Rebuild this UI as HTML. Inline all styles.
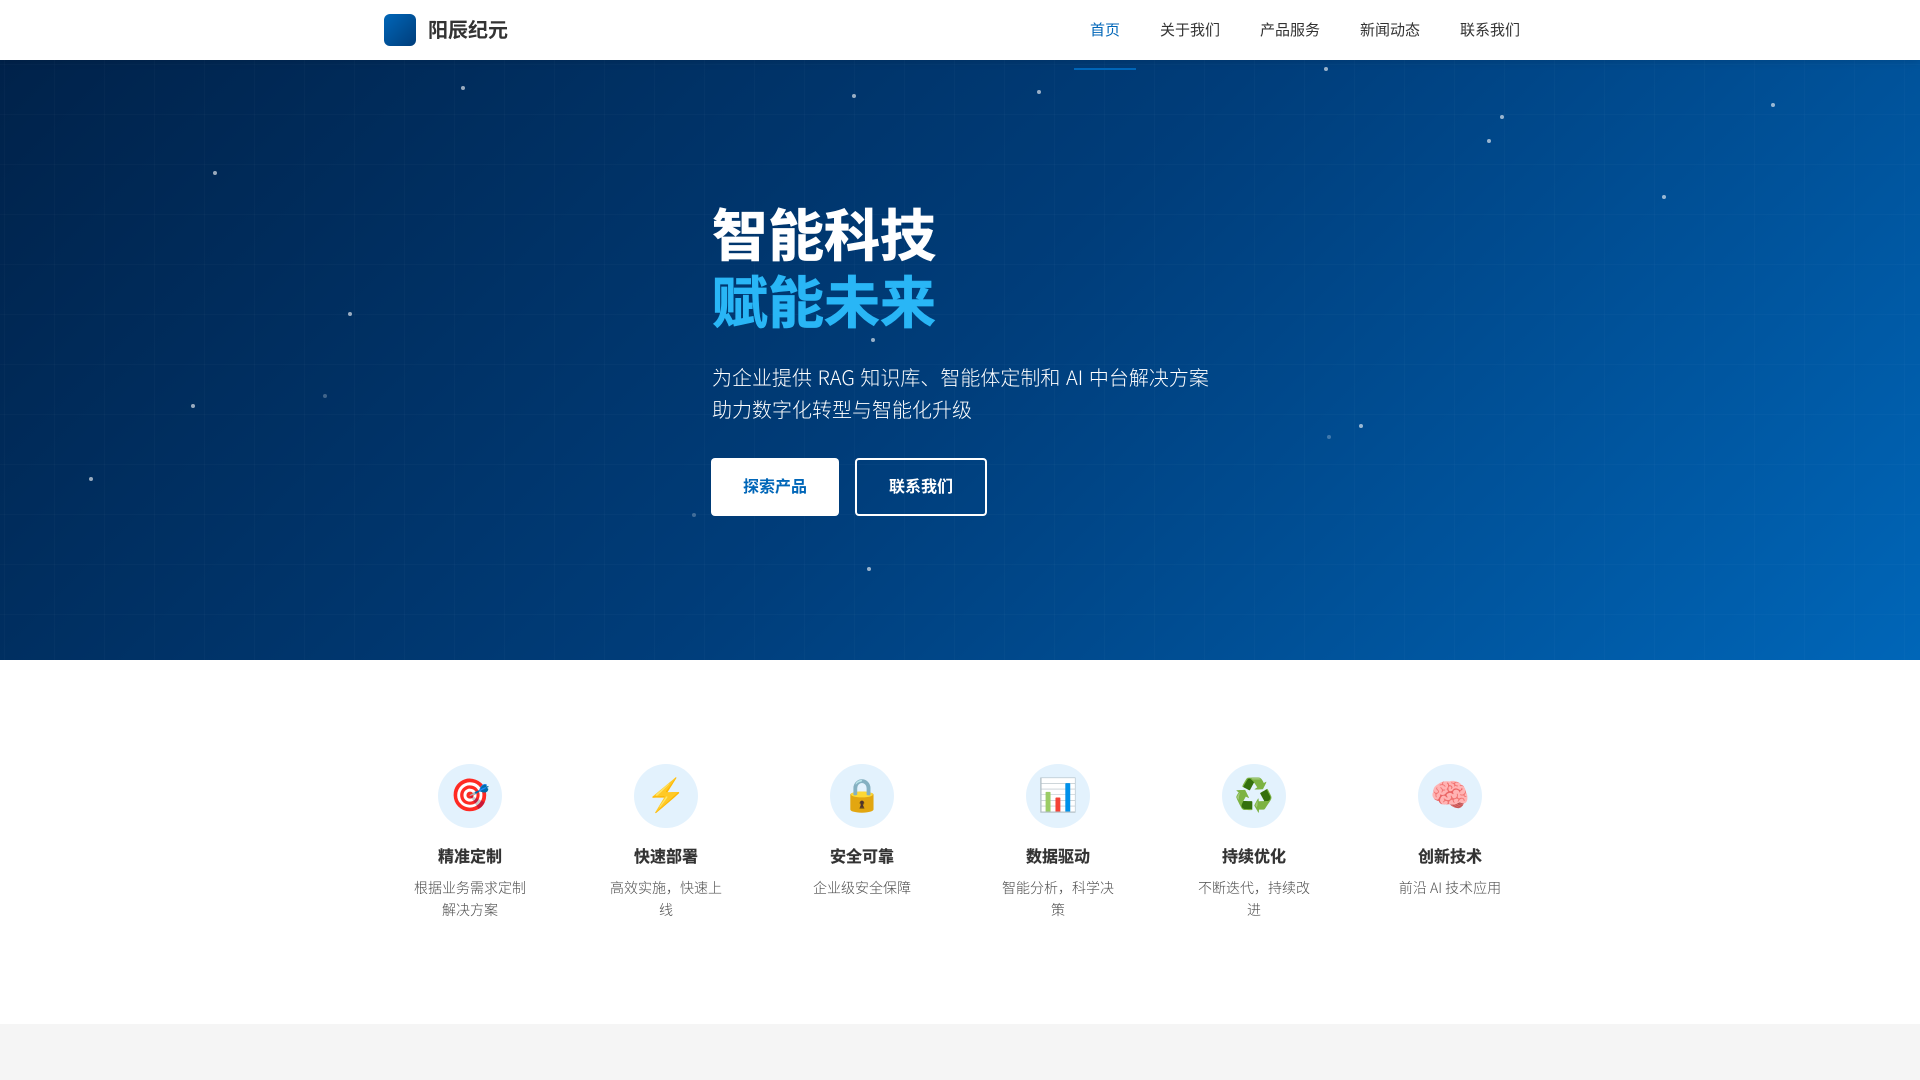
<!DOCTYPE html>
<html lang="zh-CN">
<head>
<meta charset="utf-8">
<title>阳辰纪元</title>
<style>
*{margin:0;padding:0;box-sizing:border-box}
html,body{width:1920px;height:1080px;overflow:hidden;background:#f5f5f5}
body{font-family:"Noto Sans CJK SC","Liberation Sans",sans-serif;color:#333;line-height:1.6;position:relative}
.nav{position:absolute;left:0;top:0;width:1920px;height:60px;background:#fff;box-shadow:0 2px 8px rgba(0,0,0,.1);z-index:5}
.logo{position:absolute;left:384px;top:14px;width:32px;height:32px;border-radius:6px;background:linear-gradient(135deg,#0066b8,#003d7a)}
.brand{position:absolute;left:428px;top:13px;font-size:20px;line-height:32px;font-weight:700;color:#333}
.nav a{position:absolute;top:18px;font-size:15px;line-height:24px;color:#333;text-decoration:none}
.nav a.on{color:#0066b8}
.hero{position:absolute;left:0;top:60px;width:1920px;height:600px;background:linear-gradient(135deg,#00224a 0%,#003d7a 50%,#0066b8 100%);overflow:hidden}
.grid{position:absolute;inset:0;background-image:linear-gradient(rgba(255,255,255,.02) 1px,transparent 1px),linear-gradient(90deg,rgba(255,255,255,.02) 1px,transparent 1px);background-size:50px 50px;background-position:4px 4px}
.ul{position:absolute;left:1074px;top:8px;width:62px;height:2px;background:#0066b8}
.s{position:absolute;width:4px;height:4px;border-radius:50%;background:#fff;opacity:.6}
.s.d{opacity:.25}
h1{position:absolute;left:712px;top:139px;font-size:56px;line-height:67.2px;font-weight:700;color:#fff;white-space:nowrap;-webkit-text-stroke:.7px currentColor}
h1 span{display:block;color:#29b6f6}
.sub{position:absolute;left:712px;top:301px;font-size:20px;line-height:32px;font-weight:300;word-spacing:1.2px;color:#fff;white-space:nowrap}
.btn{position:absolute;top:398px;height:58px;border-radius:4px;font-size:16px;font-weight:700;text-align:center}
.b1{left:711px;width:128px;background:#fff;color:#0066b8;line-height:54px}
.b2{left:855px;width:132px;border:2px solid #fff;color:#fff;line-height:50px}
.features{position:absolute;left:0;top:660px;width:1920px;height:364px;background:#fff}
.it{position:absolute;top:104px;width:172px;text-align:center}
.ic{width:64px;height:64px;border-radius:50%;background:#e3f2fd;margin:0 auto 15px;display:flex;align-items:center;justify-content:center;font-size:32px;line-height:1;padding-bottom:2px;font-family:"Noto Color Emoji","Liberation Sans",sans-serif}
.it h3{font-size:16px;line-height:25.6px;font-weight:700;color:#333;margin-bottom:9.5px;-webkit-text-stroke:.2px currentColor}
.it p{font-size:14px;line-height:21.5px;font-weight:300;color:#4d4d4d;padding:0 24px}
</style>
</head>
<body>
<div class="nav">
  <div class="logo"></div>
  <div class="brand">阳辰纪元</div>
  <a class="on" style="left:1090px">首页</a>
  <a style="left:1160px">关于我们</a>
  <a style="left:1260px">产品服务</a>
  <a style="left:1360px">新闻动态</a>
  <a style="left:1460px">联系我们</a>
</div>
<div class="hero">
  <div class="grid"></div>
  <div class="ul"></div>
  <i class="s" style="left:461px;top:26px"></i>
  <i class="s" style="left:852px;top:34px"></i>
  <i class="s" style="left:1037px;top:30px"></i>
  <i class="s" style="left:1324px;top:7px"></i>
  <i class="s" style="left:1500px;top:55px"></i>
  <i class="s" style="left:1487px;top:79px"></i>
  <i class="s" style="left:1771px;top:43px"></i>
  <i class="s" style="left:1662px;top:135px"></i>
  <i class="s" style="left:213px;top:111px"></i>
  <i class="s" style="left:348px;top:252px"></i>
  <i class="s" style="left:191px;top:344px"></i>
  <i class="s" style="left:89px;top:417px"></i>
  <i class="s d" style="left:323px;top:334px"></i>
  <i class="s" style="left:871px;top:278px"></i>
  <i class="s" style="left:1359px;top:364px"></i>
  <i class="s d" style="left:1327px;top:375px"></i>
  <i class="s d" style="left:692px;top:453px"></i>
  <i class="s" style="left:867px;top:507px"></i>
  <h1>智能科技<span>赋能未来</span></h1>
  <div class="sub">为企业提供 RAG 知识库、智能体定制和 AI 中台解决方案<br>助力数字化转型与智能化升级</div>
  <div class="btn b1">探索产品</div>
  <div class="btn b2">联系我们</div>
</div>
<div class="features">
  <div class="it" style="left:384px"><div class="ic">🎯</div><h3>精准定制</h3><p>根据业务需求定制解决方案</p></div>
  <div class="it" style="left:580px"><div class="ic">⚡</div><h3>快速部署</h3><p>高效实施，快速上线</p></div>
  <div class="it" style="left:776px"><div class="ic">🔒</div><h3>安全可靠</h3><p>企业级安全保障</p></div>
  <div class="it" style="left:972px"><div class="ic">📊</div><h3>数据驱动</h3><p>智能分析，科学决策</p></div>
  <div class="it" style="left:1168px"><div class="ic">♻️</div><h3>持续优化</h3><p>不断迭代，持续改进</p></div>
  <div class="it" style="left:1364px"><div class="ic">🧠</div><h3>创新技术</h3><p>前沿 AI 技术应用</p></div>
</div>
</body>
</html>
